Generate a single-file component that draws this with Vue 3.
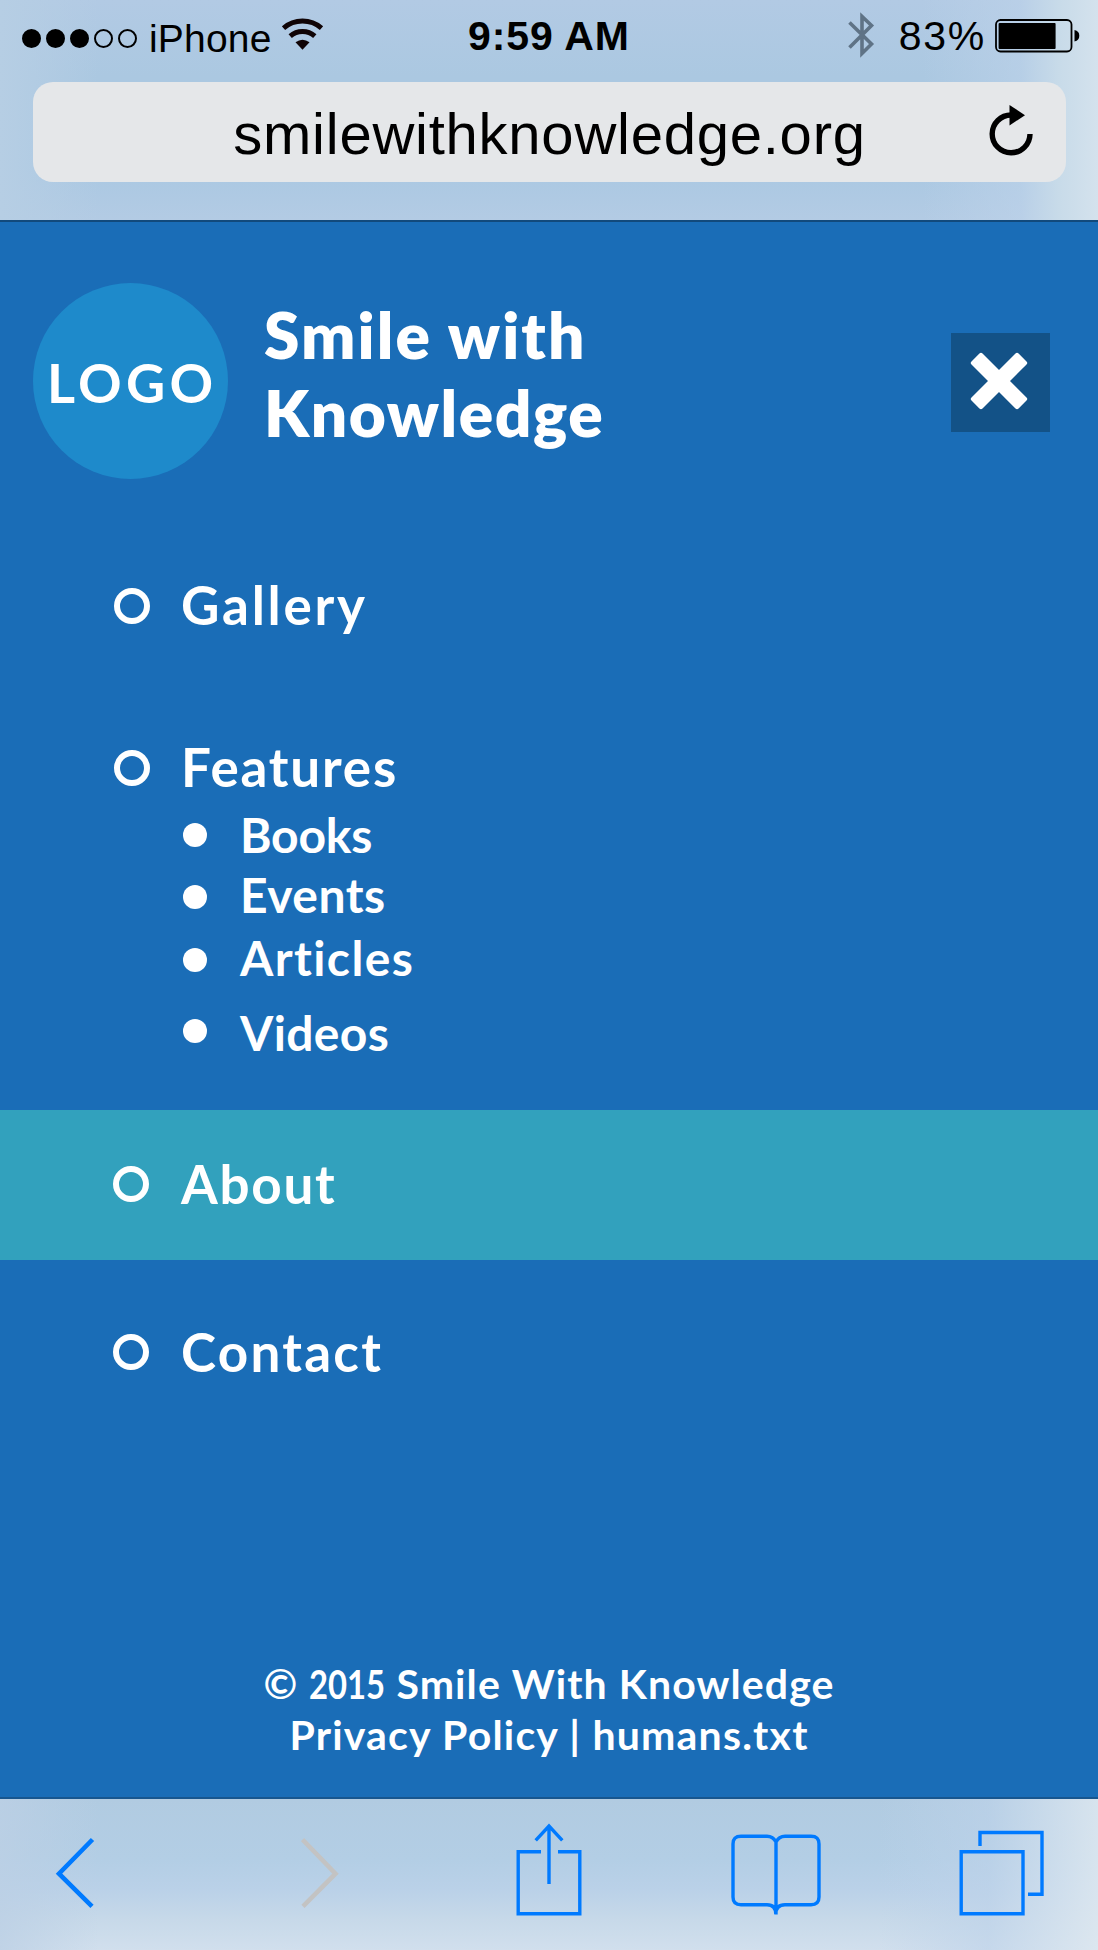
<script setup>
const signal = [true, true, true, false, false]

const menu = [
  { label: 'Gallery', name: 'gallery', spacing: 2.7 },
  {
    label: 'Features',
    name: 'features',
    spacing: 1.8,
    children: [
      { label: 'Books', name: 'books', spacing: -0.2 },
      { label: 'Events', name: 'events', spacing: 0.5 },
      { label: 'Articles', name: 'articles', spacing: 1.4 },
      { label: 'Videos', name: 'videos', spacing: 0.34 },
    ],
  },
  { label: 'About', name: 'about', spacing: 1.71 },
  { label: 'Contact', name: 'contact', spacing: 2.25 },
]
</script>

<template>
  <div class="screen">
    <header class="chrome">
      <div class="status">
        <div class="status-left">
          <span class="dots">
            <i v-for="(on, i) in signal" :key="i" class="dot" :class="{ on }"></i>
          </span>
          <span class="carrier">iPhone</span>
          <svg class="wifi" width="42" height="34" viewBox="0 0 42 34" fill="none">
            <path d="M1.5 11.2 A29 29 0 0 1 39.5 11.2" stroke="#100406" stroke-width="5" />
            <path d="M8.2 19.2 A18.5 18.5 0 0 1 32.8 19.2" stroke="#100406" stroke-width="5" />
            <path d="M13.5 25.3 Q20.5 20.2 27.5 25.3 L20.5 32.8 Z" fill="#100406" />
          </svg>
        </div>
        <span class="time">9:59 AM</span>
        <div class="status-right">
          <svg class="bluetooth" width="28" height="48" viewBox="0 0 28 48" fill="none" stroke="#5f7386" stroke-width="3.6">
            <path d="M1.5 11.5 L23.5 33 L14 42.5 V5.5 L23.5 14.5 L1.5 36.5" />
          </svg>
          <span class="percent">83%</span>
          <svg class="battery" width="85" height="34" viewBox="0 0 85 34">
            <rect x="1" y="1" width="75.5" height="31.5" rx="4.5" fill="none" stroke="#000" stroke-width="1.8" />
            <rect x="3.6" y="4" width="57" height="26" rx="1" />
            <path d="M79.5 11 Q84.3 12 84.3 16.7 Q84.3 21.5 79.5 22.4 Z" />
          </svg>
        </div>
      </div>
      <div class="address">
        <span class="url">smilewithknowledge.org</span>
        <svg class="reload" width="48" height="60" viewBox="0 0 48 60">
          <path d="M41 33 A18.9 18.9 0 1 1 22.2 14" fill="none" stroke="#000" stroke-width="5.4" />
          <path d="M20.5 4 L36 14.2 L20.5 24.5 Z" />
        </svg>
      </div>
    </header>

    <main class="page">
      <div class="brand">
        <div class="logo">LOGO</div>
        <h1 class="title">
          <span class="title-top">Smile with</span>
          <span class="title-bottom">Knowledge</span>
        </h1>
        <button class="close" aria-label="Close menu">
          <svg width="99" height="99" viewBox="0 0 99 99" fill="#fff">
            <rect x="14.7" y="40.2" width="66.6" height="15.6" rx="2.2" transform="rotate(45 48 48)" />
            <rect x="14.7" y="40.2" width="66.6" height="15.6" rx="2.2" transform="rotate(-45 48 48)" />
          </svg>
        </button>
      </div>

      <nav class="menu">
        <section v-for="item in menu" :key="item.name" :class="['group', item.name]">
          <div class="item">
            <i class="ring"></i>
            <span :style="{ letterSpacing: item.spacing + 'px' }">{{ item.label }}</span>
          </div>
          <div v-for="sub in item.children" :key="sub.name" :class="['sub', sub.name]">
            <i class="bullet"></i>
            <span :style="{ letterSpacing: sub.spacing + 'px' }">{{ sub.label }}</span>
          </div>
        </section>
      </nav>

      <footer class="footer">
        <div class="copyright">© <span class="year">2015</span> Smile With Knowledge</div>
        <div class="links">Privacy Policy | humans.txt</div>
      </footer>
    </main>

    <div class="toolbar">
      <svg class="back" width="40" height="72" viewBox="0 0 40 72" fill="none" stroke="#007aff" stroke-width="4.6">
        <path d="M37.5 2.5 L4 36.7 L37 69.3" />
      </svg>
      <svg class="forward" width="40" height="72" viewBox="0 0 40 72" fill="none" stroke="#c3c3c3" stroke-width="4.6">
        <path d="M1.5 2.5 L34.5 36.7 L2 69.3" />
      </svg>
      <svg class="share" width="66" height="94" viewBox="0 0 66 94" fill="none" stroke="#007aff" stroke-width="3.4">
        <path d="M25 28.7 H2.2 V90.7 H63.8 V28.7 H42 M33 3 V61 M19.7 17.3 L33 3 L46.3 17.3" />
      </svg>
      <svg class="book" width="90" height="82" viewBox="0 0 90 82" fill="none" stroke="#007aff" stroke-width="3.4">
        <path d="M45 8 C43 4 40 2.2 36 2.2 H10 Q2 2.2 2 10 V63 Q2 70.7 10 70.7 H36 C41 70.7 44.8 73 44.8 80 C44.8 73 49 70.7 54 70.7 H80 Q88 70.7 88 63 V10 Q88 2.2 80 2.2 H54 C50 2.2 47 4 45 8 V80.5" />
      </svg>
      <svg class="tabs" width="86" height="86" viewBox="0 0 86 86" fill="none" stroke="#007aff" stroke-width="3.4">
        <path d="M2.2 21.7 H64 V83.7 H2.2 Z M21 16 V2.5 H83 V64.3 H69" />
      </svg>
    </div>
  </div>
</template>

<style>
body {
  background: #1a6db7;
}
</style>

<style scoped>
* {
  box-sizing: border-box;
}

.screen {
  width: 1098px;
  height: 1950px;
  display: flex;
  flex-direction: column;
  overflow: hidden;
  font-family: "Liberation Sans", Arial, sans-serif;
  color: #000;
}

.chrome {
  flex: none;
  height: 222px;
  border-bottom: 2px solid #124a7c;
  background:
    linear-gradient(to right, rgba(184, 207, 231, 0) 84%, rgba(190, 211, 234, 0.6) 93%, #c8dbe9 96.5%, #d4e2ed 100%),
    linear-gradient(to right, #b6cee4, rgba(182, 206, 228, 0) 9%),
    linear-gradient(to bottom, #b2cae4, #abc8e1 35%, #aac8e2 78%, #b3cbe4);
}

.status {
  height: 82px;
  display: grid;
  grid-template-columns: 1fr auto 1fr;
  align-items: start;
}

.status-left,
.status-right {
  display: flex;
  align-items: flex-start;
}

.status-left {
  padding-left: 22px;
}

.status-right {
  justify-content: flex-end;
  padding-right: 18px;
}

.dots {
  display: flex;
  gap: 5px;
  margin-top: 29px;
}

.dot {
  width: 19px;
  height: 19px;
  border: 2px solid #000;
  border-radius: 50%;
}

.dot.on {
  background: #000;
}

.carrier {
  margin-left: 12px;
  font-size: 39px;
  line-height: 77px;
  letter-spacing: 0.2px;
}

.wifi {
  margin: 17px 0 0 10px;
}

.time {
  font-size: 41px;
  font-weight: bold;
  line-height: 72px;
  letter-spacing: 0.87px;
}

.bluetooth {
  margin-top: 11px;
}

.percent {
  margin-left: 23px;
  font-size: 41px;
  line-height: 72px;
  letter-spacing: 1.7px;
}

.battery {
  margin: 19px 0 0 9px;
}

.address {
  display: grid;
  grid-template-columns: 1fr auto 1fr;
  height: 100px;
  margin: 0 32px 0 33px;
  border-radius: 20px;
  background: #e5e7e9;
}

.url {
  grid-column: 2;
  font-size: 58px;
  line-height: 103px;
  letter-spacing: 0.76px;
}

.reload {
  justify-self: end;
  margin: 19px 29px 0 0;
}

.page {
  flex: 1;
  display: flex;
  flex-direction: column;
  background: #1a6db7;
  color: #fff;
  font-family: Lato, "Open Sans", sans-serif;
  font-weight: 700;
}

.brand {
  display: flex;
  align-items: flex-start;
  height: 351px;
  padding: 61px 48px 0 33px;
}

.logo {
  width: 195px;
  height: 196px;
  padding-left: 14px;
  border-radius: 50%;
  background: #1e8acb;
  font-size: 54px;
  line-height: 200px;
  letter-spacing: 4.3px;
  white-space: nowrap;
}

.title {
  flex: 1;
  margin: 13px 0 0 36px;
  font-size: 64px;
  font-weight: 800;
  line-height: 78px;
}

.title span {
  display: block;
}

.title-top {
  letter-spacing: 2.1px;
}

.title-bottom {
  letter-spacing: 1.5px;
}

.close {
  width: 99px;
  height: 99px;
  margin-top: 50px;
  padding: 0;
  border: 0;
  background: #135287;
}

.close svg {
  display: block;
}

.menu {
  flex: 1;
}

.group {
  display: flow-root;
}

.item {
  display: flex;
  align-items: flex-start;
  gap: 31px;
  height: 60px;
  padding-left: 114px;
  font-size: 53px;
  line-height: 62px;
}

.ring {
  width: 36px;
  height: 36px;
  margin-top: 14px;
  border: 6px solid #fff;
  border-radius: 50%;
}

.gallery .item {
  line-height: 64px;
}

.gallery .ring {
  margin-top: 15px;
}

.features {
  padding-top: 103px;
  padding-bottom: 54px;
}

.features .item {
  margin-bottom: 13px;
}

.about {
  height: 150px;
  padding-top: 42px;
  background: #32a1bd;
}

.contact {
  padding-top: 60px;
}

.about .item,
.contact .item {
  gap: 32px;
  padding-left: 113px;
  line-height: 64px;
}

.sub {
  display: flex;
  align-items: flex-start;
  gap: 33px;
  height: 50px;
  padding-left: 183px;
  font-size: 48px;
  line-height: 52px;
}

.bullet {
  width: 24px;
  height: 24px;
  margin-top: 14px;
  border-radius: 50%;
  background: #fff;
}

.events {
  margin-top: 9px;
}

.articles {
  margin-top: 13px;
}

.videos {
  margin-top: 25px;
}

.events,
.articles,
.videos {
  line-height: 54px;
}

.events .bullet,
.articles .bullet {
  margin-top: 17px;
}

.videos .bullet {
  margin-top: 13px;
}

.footer {
  height: 139px;
  font-size: 41px;
  line-height: 51px;
  text-align: center;
}

.copyright {
  letter-spacing: 1.1px;
}

.year {
  display: inline-block;
  width: 76px;
  letter-spacing: 0;
  text-align: left;
  transform: scaleX(0.8);
  transform-origin: left center;
}

.links {
  letter-spacing: 1.2px;
}

.toolbar {
  flex: none;
  display: flex;
  align-items: flex-start;
  height: 153px;
  padding-left: 55px;
  border-top: 2px solid #17568f;
  background:
    linear-gradient(to right, rgba(190, 211, 234, 0) 80%, rgba(190, 211, 234, 0.6) 90%, rgba(222, 232, 240, 0.85) 100%),
    linear-gradient(to right, rgba(188, 208, 229, 0.8), rgba(188, 208, 229, 0) 9%),
    linear-gradient(to bottom, #b1cbe1, #b3cee5 40%, #bad1e8 60%, #c7d9e9 80%, #d1dfed);
}

.toolbar svg {
  flex: none;
}

.back {
  margin-top: 38px;
}

.forward {
  margin: 38px 0 0 206px;
}

.share {
  margin: 24px 0 0 175px;
}

.book {
  margin: 35px 0 0 149px;
}

.tabs {
  margin: 31px 0 0 138px;
}
</style>
